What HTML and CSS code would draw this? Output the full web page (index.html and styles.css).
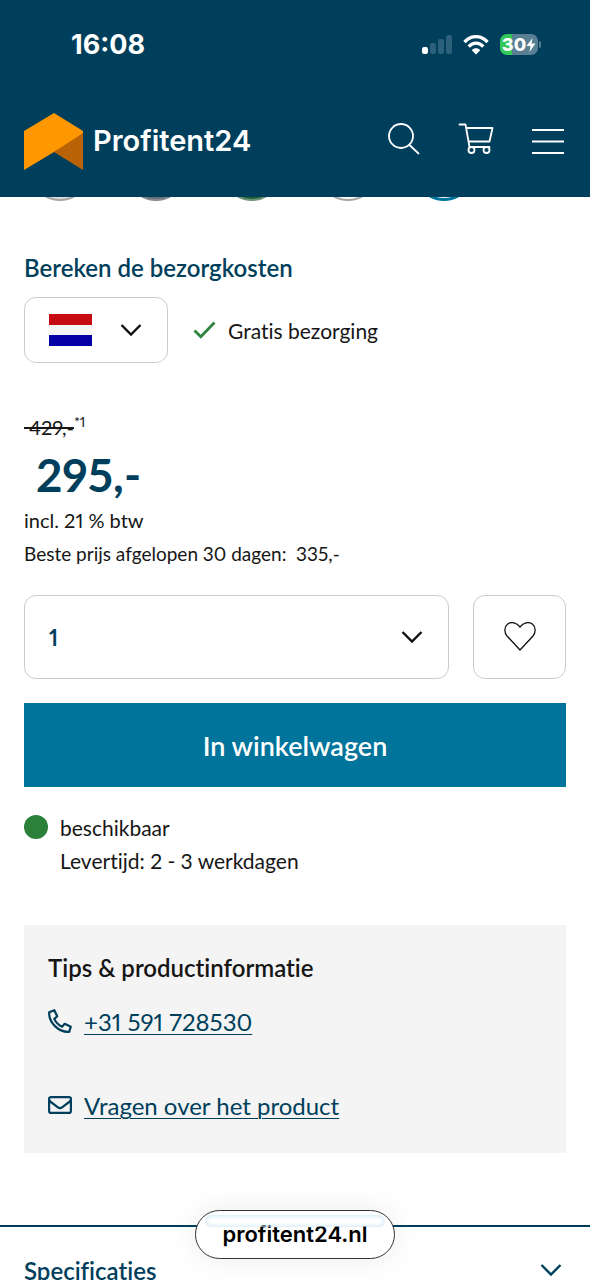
FILE: index.html
```html
<!DOCTYPE html>
<html lang="nl">
<head>
<meta charset="utf-8">
<meta name="viewport" content="width=device-width, initial-scale=1">
<title>Profitent24</title>
<link rel="stylesheet" href="styles.css">
</head>
<body>
<div class="screen">
  <header class="header">
    <div class="status">
      <time class="clock">16:08</time>
      <div class="indicators">
        <svg width="30" height="19" viewBox="0 0 30 19" aria-hidden="true"><rect x="0" y="12" width="6" height="7" rx="2" fill="#fff"/><g fill="#2b5f7a"><rect x="8" y="8" width="6" height="11" rx="2"/><rect x="16" y="4" width="6" height="15" rx="2"/><rect x="24" y="0" width="6" height="19" rx="2"/></g></svg>
        <svg class="wifi" width="26" height="20" viewBox="0 0 26 20" fill="none" stroke="#fff" stroke-width="3.4" aria-hidden="true"><path d="M1.500 7.200C8-.2 18-.2 24.500 7.200"/><path d="M5.700 11.600C10 7 16 7 20.300 11.600"/><path d="M13 19.500 8.800 15.200C11 12.700 15 12.700 17.200 15.200Z" fill="#fff" stroke="none"/></svg>
        <div class="battery"><span>30</span><svg width="10" height="14" viewBox="0 0 10 14" aria-hidden="true"><path d="M6.500 0 .5 8H4.500L3.500 14 9.500 5.500H5.500Z" fill="#fff"/></svg></div>
      </div>
    </div>
    <div class="nav">
      <a class="brand" href="#">
        <svg width="60" height="58" viewBox="0 0 60 58" aria-hidden="true"><path d="M0 18 30 0 59 18V22L30 39 0 57Z" fill="#ff9800"/><path d="M59 20V57L30 39Z" fill="#b96206"/></svg>
        <span>Profitent24</span>
      </a>
      <div class="actions">
        <button class="icon-btn" aria-label="Zoeken"><svg width="32" height="38" viewBox="0 0 32 38" fill="none" stroke="#fff" stroke-width="1.800" stroke-linecap="round"><circle cx="13" cy="13" r="12"/><path d="m21.500 22 9 8.500"/></svg></button>
        <button class="icon-btn" aria-label="Winkelwagen"><svg width="36" height="38" viewBox="0 0 36 38" fill="none" stroke="#fff" stroke-width="1.800" stroke-linecap="round" stroke-linejoin="round"><path d="M1.500 1.500H7.500L11.500 24H31.500M8.300 5H34.500L31.500 18.500H10.700"/><circle cx="13.500" cy="27" r="3"/><circle cx="28.500" cy="27" r="3"/></svg></button>
        <button class="icon-btn" aria-label="Menu"><svg width="32" height="28" viewBox="0 0 32 28" stroke="#fff" stroke-width="2.200"><path d="M0 2H32M0 13.500H32M0 25H32"/></svg></button>
      </div>
    </div>
  </header>

  <main class="main">
    <div class="swatches" aria-hidden="true">
      <i class="swatch light"></i><i class="swatch grey"></i><i class="swatch green"></i><i class="swatch white"></i><i class="swatch active"></i>
    </div>

    <section class="product">
      <h2 class="title" id="ship">Bereken de bezorgkosten</h2>
      <div class="shipping">
        <div class="picker country">
          <select aria-labelledby="ship"><option>Nederland</option></select>
          <svg class="flag" width="43" height="32" viewBox="0 0 43 32" aria-hidden="true"><path d="M0 0H43V32H0Z" fill="#f6f6f6"/><path d="M0 0H43V11H0Z" fill="#c60b12"/><path d="M0 21H43V32H0Z" fill="#0500a5"/></svg>
          <svg class="chevron" width="22" height="14" viewBox="0 0 22 14" aria-hidden="true"><path d="m1.500 2 9.500 9.500L20.500 2"/></svg>
        </div>
        <p class="free"><svg width="23" height="18" viewBox="0 0 23 18" fill="none" stroke="#2e8540" stroke-width="2.800" aria-hidden="true"><path d="m1.500 9.500 6.300 6.300L21.500 1.500"/></svg>Gratis bezorging</p>
      </div>

      <div class="prices">
        <p class="old"><s>&nbsp;429,-</s><sup>*1</sup></p>
        <p class="price">295,-</p>
        <p class="tax">incl. 21 % btw</p>
        <p class="best">Beste prijs afgelopen 30 dagen:&nbsp; 335,-</p>
      </div>

      <div class="order">
        <div class="picker quantity">
          <select aria-label="Aantal"><option>1</option></select>
          <svg class="chevron" width="22" height="14" viewBox="0 0 22 14" aria-hidden="true"><path d="m1.500 2 9.500 9.500L20.500 2"/></svg>
        </div>
        <button class="wish" aria-label="Verlanglijst"><svg width="32" height="30" viewBox="0 0 32 30" fill="none" stroke="#111" stroke-width="1.300"><path d="M16 28 3.200 14.200C-.2 10.300.3 4.500 3.700 2 7.300-.6 12.500.4 16 5 19.500.4 24.700-.6 28.300 2 31.700 4.500 32.200 10.300 28.800 14.200Z"/></svg></button>
      </div>
      <button class="buy">In winkelwagen</button>

      <div class="stock">
        <i class="dot"></i>
        <div><p>beschikbaar</p><p>Levertijd: 2 - 3 werkdagen</p></div>
      </div>

      <aside class="tips">
        <h3>Tips &amp; productinformatie</h3>
        <p class="contact"><svg width="24" height="26" viewBox="0 0 24 26" fill="none" stroke="#003f5c" stroke-width="2.200" stroke-linejoin="round" aria-hidden="true"><path d="M1.200 3.200 6.300 1.200 9.200 7.300 6.300 9.900C7.800 13.300 10.600 16.200 14.100 17.700L16.700 14.800 22.800 17.700 21.200 22.800C10.500 23.500.6 13.500 1.200 3.200Z"/></svg><a href="#">+31 591 728530</a></p>
        <p class="contact"><svg width="24" height="20" viewBox="0 0 24 20" fill="none" stroke="#003f5c" stroke-width="2.200" aria-hidden="true"><rect x="1.100" y="1.100" width="21.800" height="15.800" rx="2"/><path d="M1.500 5 9.600 11.100Q12 13 14.400 11.100L22.500 5"/></svg><a href="#">Vragen over het product</a></p>
      </aside>
    </section>

    <button class="accordion"><span>Specificaties</span><svg class="chevron" width="22" height="14" viewBox="0 0 22 14" aria-hidden="true"><path d="m1.500 2 9.500 9.500L20.500 2"/></svg></button>
  </main>
  <button class="address">profitent24.nl</button>
</div>
</body>
</html>
```

FILE: styles.css
```css
* { box-sizing: border-box; }
body, h2, h3, p { margin: 0; }
button, select { font: inherit; color: inherit; }
button { padding: 0; border: 0; background: none; cursor: pointer; }
svg { display: block; flex: none; }

body {
  background: #fff;
  color: #161616;
  font: 21px/33px Lato, "Noto Sans", sans-serif;
  font-variant-ligatures: none;
  font-variant-numeric: proportional-nums;
}
.screen {
  position: relative;
  height: 100vh;
  overflow: hidden;
}

/* Header */
.header { background: #003f5c; color: #fff; }
.status {
  display: flex;
  justify-content: space-between;
  align-items: center;
  height: 89px;
  padding: 0 52px 0 71px;
}
.clock { font: 700 27px/32px Inter, sans-serif; }
.indicators { display: flex; align-items: center; gap: 11px; }
.battery {
  position: relative;
  display: flex;
  align-items: center;
  justify-content: center;
  width: 38px;
  height: 21px;
  border-radius: 7px;
  background: linear-gradient(90deg, #34c759 32%, #587f94 32%);
  font: 800 18px/21px Inter, sans-serif;
}
.battery::after {
  content: "";
  position: absolute;
  right: -3px;
  width: 2px;
  height: 7px;
  border-radius: 0 2px 2px 0;
  background: #587f94;
}
.nav {
  display: flex;
  justify-content: space-between;
  align-items: center;
  height: 108px;
  padding: 0 26px 2px 24px;
}
.brand {
  display: flex;
  align-items: center;
  gap: 9px;
  color: #fff;
  font: 600 29px/36px Inter, sans-serif;
  text-decoration: none;
}
.brand span { padding-bottom: 2px; }
.actions { display: flex; align-items: center; gap: 38px; }

/* Colour swatches, scrolled behind the header */
.swatches {
  display: flex;
  align-items: flex-end;
  gap: 36px;
  height: 4px;
  padding: 0 30px;
  overflow: hidden;
}
.swatch {
  flex: none;
  width: 60px;
  height: 60px;
  border: 2px solid #a5a5a5;
  border-radius: 50%;
}
.light { background: #ddd; }
.grey { border-color: #85888f; background: #666b75; }
.green { border-color: #6f9479; background: #23633a; }
.active { border: 3px solid #00739b; }

/* Product */
.product { padding: 50px 24px 0; }
.title { color: #003f5c; font-size: 24px; font-weight: 600; line-height: 33px; }
.shipping { display: flex; align-items: center; gap: 25px; margin-top: 13px; }
.picker { display: grid; align-items: center; }
.picker > * { grid-area: 1 / 1; }
.picker svg { pointer-events: none; }
.picker select {
  width: 100%;
  height: 100%;
  padding: 0 24px;
  border: 1px solid #ccc;
  border-radius: 12px;
  background: #fff;
  appearance: none;
}
.chevron { fill: none; stroke: #111; stroke-width: 2.4; }
.picker .chevron { justify-self: end; margin-right: 26px; }
.country { width: 144px; height: 66px; }
.country select { color: transparent; }
.flag { margin-left: 25px; }
.free { display: flex; align-items: center; gap: 12px; }

.prices { margin-top: 45px; }
.old { font-size: 20px; line-height: 38px; }
.old sup { font-size: 14px; line-height: 0; }
.price { padding-left: 12px; color: #003f5c; font-size: 46px; font-weight: 700; line-height: 58px; }
.tax { font-size: 20px; }
.best { font-size: 19px; }

.order { display: flex; gap: 24px; margin-top: 25px; }
.quantity { flex: 1; height: 84px; }
.quantity select { color: #003f5c; font-size: 22px; font-weight: 700; }
.wish {
  display: grid;
  place-items: center;
  width: 93px;
  height: 84px;
  border: 1px solid #ccc;
  border-radius: 12px;
}
.buy {
  width: 100%;
  height: 84px;
  margin-top: 24px;
  background: #00749b;
  color: #fff;
  font-size: 27px;
  font-weight: 600;
}
.stock { display: flex; gap: 12px; margin-top: 24px; }
.dot { width: 24px; height: 24px; margin-top: 4px; border-radius: 50%; background: #2b8139; }

.tips {
  margin-top: 48px;
  padding: 26px 24px 31px;
  background: #f4f4f4;
}
.tips h3 { font-size: 24px; font-weight: 600; line-height: 33px; }
.contact { display: flex; align-items: center; gap: 12px; margin-top: 21px; font-size: 24px; }
.contact + .contact { margin-top: 51px; }
.contact a { color: #003f5c; text-decoration-thickness: 1px; text-underline-offset: 3px; }

.accordion {
  display: flex;
  justify-content: space-between;
  align-items: center;
  width: 100%;
  height: 88px;
  margin-top: 72px;
  padding: 0 28px 0 24px;
  border-top: 2px solid #003f5c;
  color: #003f5c;
  font-size: 24px;
  font-weight: 600;
}
.accordion .chevron { stroke: #003f5c; }

/* Browser address pill floating over the page */
.address {
  position: absolute;
  bottom: 21px;
  left: 50%;
  width: 200px;
  height: 49px;
  margin-left: -100px;
  border: 1px solid #333;
  border-radius: 25px;
  background: #fff;
  box-shadow: 0 0 30px rgb(0 0 0 / 8%);
  color: #000;
  font: 600 22px/47px Inter, sans-serif;
}
.address::before {
  content: "";
  position: absolute;
  top: 4px;
  left: 9px;
  right: 9px;
  height: 12px;
  border-radius: 6px;
  box-shadow: inset 0 0 4px 1px #cfe9f7;
}
```
